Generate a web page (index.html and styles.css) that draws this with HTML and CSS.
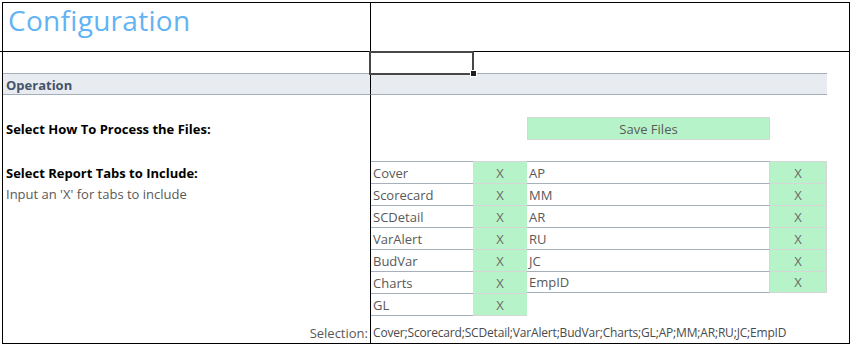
FILE: index.html
```html
<!DOCTYPE html>
<html>
<head>
<meta charset="utf-8">
<link rel="stylesheet" href="styles.css">
</head>
<body>
<div class="sheet">
  <!-- row 1 -->
  <div class="c a title-row"><span class="title">Configuration</span></div>
  <div class="c span5 title-row"></div>
  <!-- row 2 -->
  <div class="c a"></div>
  <div class="c selected"></div>
  <div class="c span4"></div>
  <!-- row 3 -->
  <div class="c a band"><span class="band-text">Operation</span></div>
  <div class="c band span4"></div>
  <div class="c"></div>
  <!-- row 4 -->
  <div class="c a"></div>
  <div class="c span5"></div>
  <!-- row 5 -->
  <div class="c a"><span class="label">Select How To Process the Files:</span></div>
  <div class="c"></div>
  <div class="c"></div>
  <div class="c btn">Save Files</div>
  <div class="c"></div>
  <div class="c"></div>
  <!-- row 6 -->
  <div class="c a"></div>
  <div class="c span5"></div>
  <!-- table rows -->
  <div class="c a"><span class="label">Select Report Tabs to Include:</span></div>
  <div class="c name">Cover</div><div class="c x">X</div>
  <div class="c name wide">AP</div><div class="c x right">X</div><div class="c"></div>

  <div class="c a"><span class="note">Input an 'X' for tabs to include</span></div>
  <div class="c name">Scorecard</div><div class="c x">X</div>
  <div class="c name wide">MM</div><div class="c x right">X</div><div class="c"></div>

  <div class="c a"></div>
  <div class="c name">SCDetail</div><div class="c x">X</div>
  <div class="c name wide">AR</div><div class="c x right">X</div><div class="c"></div>

  <div class="c a"></div>
  <div class="c name">VarAlert</div><div class="c x">X</div>
  <div class="c name wide">RU</div><div class="c x right">X</div><div class="c"></div>

  <div class="c a"></div>
  <div class="c name">BudVar</div><div class="c x">X</div>
  <div class="c name wide">JC</div><div class="c x right">X</div><div class="c"></div>

  <div class="c a"></div>
  <div class="c name">Charts</div><div class="c x">X</div>
  <div class="c name wide last">EmpID</div><div class="c x right last">X</div><div class="c"></div>

  <div class="c a"></div>
  <div class="c name last">GL</div><div class="c x last">X</div>
  <div class="c"></div><div class="c"></div><div class="c"></div>
  <!-- selection row -->
  <div class="c a sel-label">Selection:</div>
  <div class="c span5 sel-value">Cover;Scorecard;SCDetail;VarAlert;BudVar;Charts;GL;AP;MM;AR;RU;JC;EmpID</div>
</div>
</body>
</html>
```
FILE: styles.css
```css
html, body {
  margin: 0;
  padding: 0;
  background: #ffffff;
}
body {
  padding: 2px 0 0 2px;
  font-family: "Open Sans", "Noto Sans", sans-serif;
  font-size: 13px;
  color: #595959;
}
.sheet {
  width: 846px;
  border: 1px solid #000;
  display: grid;
  grid-template-columns: 368px 102px 54px 243px 57px 22px;
  grid-template-rows: 49px 21px 22px 22px 22px 22px repeat(6, 22px) 23px 27px;
  position: relative;
}
.sheet::before {
  content: "";
  position: absolute;
  left: -3px;
  top: 48px;
  width: 3px;
  height: 1px;
  background: #000;
}
.c {
  box-sizing: border-box;
  min-width: 0;
  display: flex;
  align-items: center;
  white-space: nowrap;
}
.a {
  border-right: 1px solid #000;
}
.span5 { grid-column: span 5; }
.span4 { grid-column: span 4; }
.title-row {
  border-bottom: 1px solid #000;
  align-items: flex-start;
}
.title {
  font-size: 28px;
  line-height: 26px;
  color: #61b3f4;
  padding-left: 5px;
  padding-top: 4px;
  letter-spacing: 0.3px;
}
.selected {
  position: relative;
}
.selected::after {
  content: "";
  position: absolute;
  left: -2px;
  top: -1px;
  right: -1px;
  bottom: -2px;
  border: 2px solid #474747;
}
.selected::before {
  content: "";
  position: absolute;
  right: -4px;
  bottom: -4px;
  width: 5px;
  height: 5px;
  background: #1e1e1e;
  border: 1px solid #fff;
  z-index: 2;
}
.band {
  background: #e8ecf0;
  border-top: 1px solid #a2aeb9;
  border-bottom: 1px solid #a2aeb9;
}
.band-text {
  font-weight: 700;
  color: #44546a;
  padding-left: 3px;
  padding-top: 1px;
}
.label {
  font-weight: 700;
  color: #000;
  padding-left: 3px;
  padding-top: 2px;
}
.note {
  color: #595959;
  padding-left: 3px;
}
.btn {
  background: #b7f3c8;
  border: 1px solid #d6d6d6;
  justify-content: center;
  height: 23px;
  color: #595959;
}
.name {
  border-top: 1px solid #a6b0ba;
  padding-left: 2px;
}
.name.last {
  border-bottom: 1px solid #a6b0ba;
}
.wide {
  border-right: 1px solid #d6d6d6;
}
.x {
  background: #b7f3c8;
  border-top: 1px solid #d6d6d6;
  justify-content: center;
  color: #6a6a6a;
}
.x.last {
  border-bottom: 1px solid #d6d6d6;
}
.x.right {
  border-right: 1px solid #d6d6d6;
}
.sel-label {
  justify-content: flex-end;
  padding-right: 2px;
  padding-top: 6px;
}
.sel-value {
  padding-left: 2px;
  padding-top: 6px;
  color: #4a4a4a;
  font-size: 12px;
  letter-spacing: -0.18px;
}
```
